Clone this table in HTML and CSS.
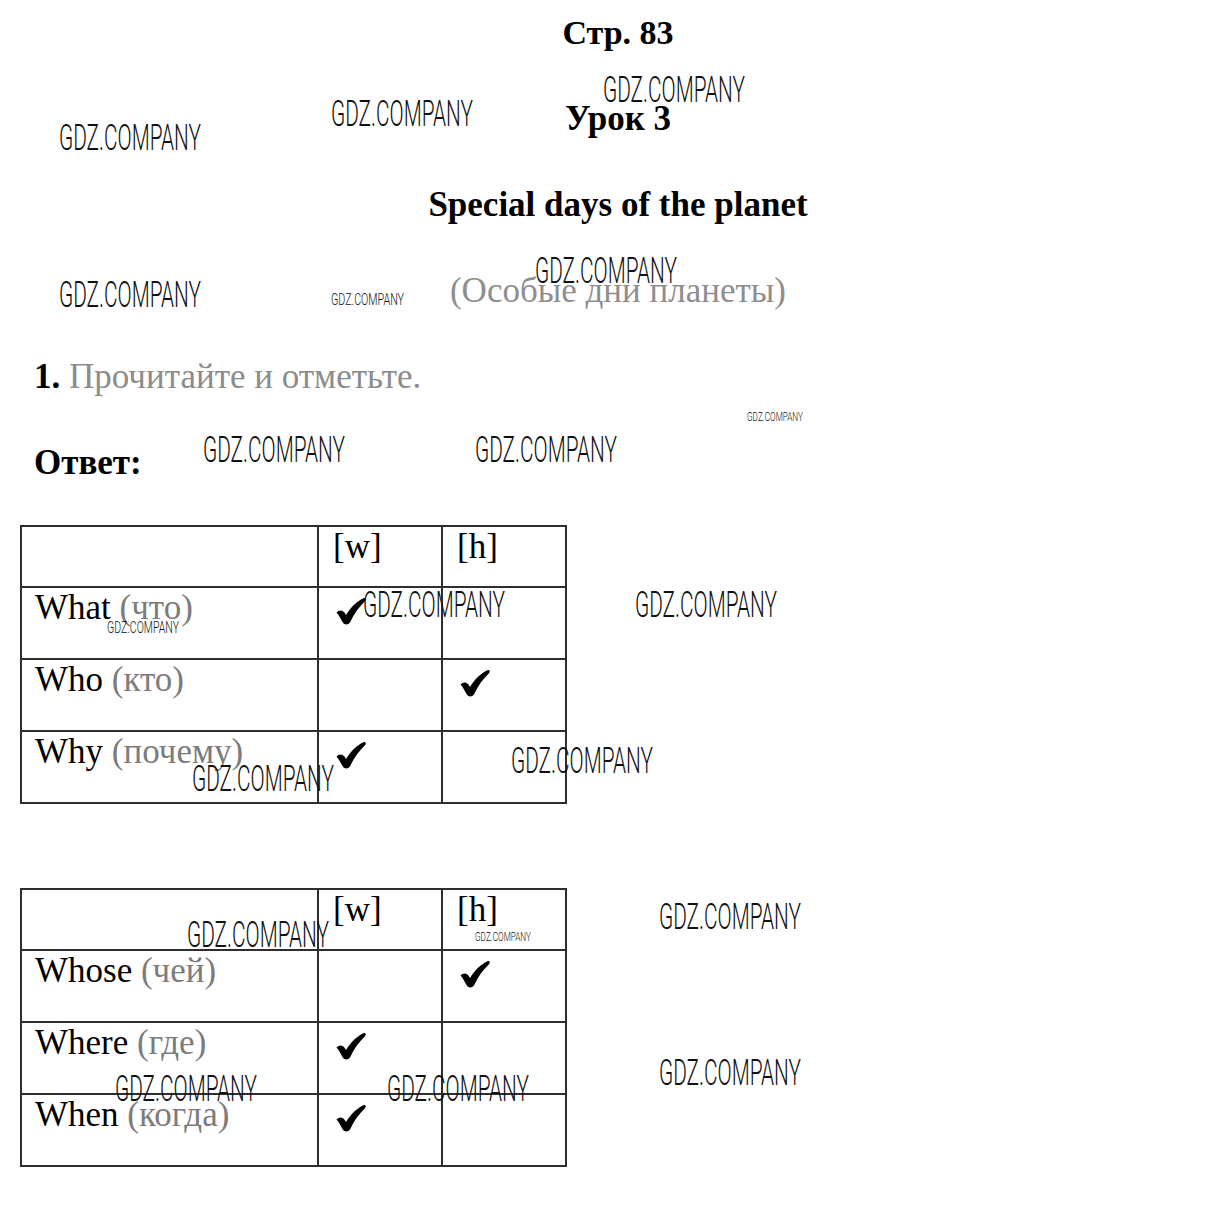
FILE: index.html
```html
<!DOCTYPE html>
<html lang="ru">
<head>
<meta charset="utf-8">
<title>Стр. 83</title>
<link rel="stylesheet" href="styles.css">
</head>
<body>
<div class="page">
  <h1 class="head">Стр. 83</h1>
  <h2 class="head">Урок 3</h2>
  <h2 class="head">Special days of the planet</h2>
  <p class="subtitle">(Особые дни планеты)</p>
  <p class="task"><b>1.</b> Прочитайте и отметьте.</p>
  <p class="answer">Ответ:</p>

  <table class="grid">
    <tr class="hrow"><td class="c1"></td><td class="c2">[w]</td><td class="c3">[h]</td></tr>
    <tr><td class="c1">What <span class="ru">(что)</span></td><td class="c2"><svg class="tick" viewBox="0 0 30 27" width="30" height="27"><path d="M.5 14.5C3 11.5 7 11.8 8.8 15L10 17C14.5 9.5 20.5 3.5 27.5.3C29.6-.5 30.5 1.6 29 3.2C22.5 9.5 18 15.5 14.5 23.5C13 26.8 9 27.6 7 24.8C5 21.8 3.2 17.2.5 14.5Z"/></svg></td><td class="c3"></td></tr>
    <tr><td class="c1">Who <span class="ru">(кто)</span></td><td class="c2"></td><td class="c3"><svg class="tick" viewBox="0 0 30 27" width="30" height="27"><path d="M.5 14.5C3 11.5 7 11.8 8.8 15L10 17C14.5 9.5 20.5 3.5 27.5.3C29.6-.5 30.5 1.6 29 3.2C22.5 9.5 18 15.5 14.5 23.5C13 26.8 9 27.6 7 24.8C5 21.8 3.2 17.2.5 14.5Z"/></svg></td></tr>
    <tr><td class="c1">Why <span class="ru">(почему)</span></td><td class="c2"><svg class="tick" viewBox="0 0 30 27" width="30" height="27"><path d="M.5 14.5C3 11.5 7 11.8 8.8 15L10 17C14.5 9.5 20.5 3.5 27.5.3C29.6-.5 30.5 1.6 29 3.2C22.5 9.5 18 15.5 14.5 23.5C13 26.8 9 27.6 7 24.8C5 21.8 3.2 17.2.5 14.5Z"/></svg></td><td class="c3"></td></tr>
  </table>

  <table class="grid second">
    <tr class="hrow"><td class="c1"></td><td class="c2">[w]</td><td class="c3">[h]</td></tr>
    <tr><td class="c1">Whose <span class="ru">(чей)</span></td><td class="c2"></td><td class="c3"><svg class="tick" viewBox="0 0 30 27" width="30" height="27"><path d="M.5 14.5C3 11.5 7 11.8 8.8 15L10 17C14.5 9.5 20.5 3.5 27.5.3C29.6-.5 30.5 1.6 29 3.2C22.5 9.5 18 15.5 14.5 23.5C13 26.8 9 27.6 7 24.8C5 21.8 3.2 17.2.5 14.5Z"/></svg></td></tr>
    <tr><td class="c1">Where <span class="ru">(где)</span></td><td class="c2"><svg class="tick" viewBox="0 0 30 27" width="30" height="27"><path d="M.5 14.5C3 11.5 7 11.8 8.8 15L10 17C14.5 9.5 20.5 3.5 27.5.3C29.6-.5 30.5 1.6 29 3.2C22.5 9.5 18 15.5 14.5 23.5C13 26.8 9 27.6 7 24.8C5 21.8 3.2 17.2.5 14.5Z"/></svg></td><td class="c3"></td></tr>
    <tr><td class="c1">When <span class="ru">(когда)</span></td><td class="c2"><svg class="tick" viewBox="0 0 30 27" width="30" height="27"><path d="M.5 14.5C3 11.5 7 11.8 8.8 15L10 17C14.5 9.5 20.5 3.5 27.5.3C29.6-.5 30.5 1.6 29 3.2C22.5 9.5 18 15.5 14.5 23.5C13 26.8 9 27.6 7 24.8C5 21.8 3.2 17.2.5 14.5Z"/></svg></td><td class="c3"></td></tr>
  </table>

  <svg class="wm big w1" width="142" height="28"><text x="0" y="27" textLength="142" lengthAdjust="spacingAndGlyphs">GDZ.COMPANY</text></svg>
  <svg class="wm big w2" width="142" height="28"><text x="0" y="27" textLength="142" lengthAdjust="spacingAndGlyphs">GDZ.COMPANY</text></svg>
  <svg class="wm big w3" width="142" height="28"><text x="0" y="27" textLength="142" lengthAdjust="spacingAndGlyphs">GDZ.COMPANY</text></svg>
  <svg class="wm big w4" width="142" height="28"><text x="0" y="27" textLength="142" lengthAdjust="spacingAndGlyphs">GDZ.COMPANY</text></svg>
  <svg class="wm small w5" width="73" height="14"><text x="0" y="13" textLength="73" lengthAdjust="spacingAndGlyphs">GDZ.COMPANY</text></svg>
  <svg class="wm big w6" width="142" height="28"><text x="0" y="27" textLength="142" lengthAdjust="spacingAndGlyphs">GDZ.COMPANY</text></svg>
  <svg class="wm tiny w7" width="56" height="12"><text x="0" y="11" textLength="56" lengthAdjust="spacingAndGlyphs">GDZ.COMPANY</text></svg>
  <svg class="wm big w8" width="142" height="28"><text x="0" y="27" textLength="142" lengthAdjust="spacingAndGlyphs">GDZ.COMPANY</text></svg>
  <svg class="wm big w9" width="142" height="28"><text x="0" y="27" textLength="142" lengthAdjust="spacingAndGlyphs">GDZ.COMPANY</text></svg>
  <svg class="wm small w10" width="72" height="14"><text x="0" y="13" textLength="72" lengthAdjust="spacingAndGlyphs">GDZ.COMPANY</text></svg>
  <svg class="wm big w11" width="142" height="28"><text x="0" y="27" textLength="142" lengthAdjust="spacingAndGlyphs">GDZ.COMPANY</text></svg>
  <svg class="wm big w12" width="142" height="28"><text x="0" y="27" textLength="142" lengthAdjust="spacingAndGlyphs">GDZ.COMPANY</text></svg>
  <svg class="wm big w13" width="142" height="28"><text x="0" y="27" textLength="142" lengthAdjust="spacingAndGlyphs">GDZ.COMPANY</text></svg>
  <svg class="wm big w14" width="142" height="28"><text x="0" y="27" textLength="142" lengthAdjust="spacingAndGlyphs">GDZ.COMPANY</text></svg>
  <svg class="wm big w15" width="142" height="28"><text x="0" y="27" textLength="142" lengthAdjust="spacingAndGlyphs">GDZ.COMPANY</text></svg>
  <svg class="wm big w16" width="142" height="28"><text x="0" y="27" textLength="142" lengthAdjust="spacingAndGlyphs">GDZ.COMPANY</text></svg>
  <svg class="wm tiny w17" width="56" height="12"><text x="0" y="11" textLength="56" lengthAdjust="spacingAndGlyphs">GDZ.COMPANY</text></svg>
  <svg class="wm big w18" width="142" height="28"><text x="0" y="27" textLength="142" lengthAdjust="spacingAndGlyphs">GDZ.COMPANY</text></svg>
  <svg class="wm big w19" width="142" height="28"><text x="0" y="27" textLength="142" lengthAdjust="spacingAndGlyphs">GDZ.COMPANY</text></svg>
  <svg class="wm big w20" width="142" height="28"><text x="0" y="27" textLength="142" lengthAdjust="spacingAndGlyphs">GDZ.COMPANY</text></svg>
</div>
</body>
</html>
```

FILE: styles.css
```css
html, body {
  margin: 0;
  padding: 0;
  background: #fff;
}

.page {
  position: relative;
  width: 1232px;
  height: 1219px;
  box-sizing: border-box;
  padding: 13px 20px 0 20px;
  font-family: "Liberation Serif", "Times New Roman", serif;
  color: #000;
  overflow: hidden;
}

.head {
  margin: 0 0 46px 0;
  padding-left: 4px;
  text-align: center;
  font-size: 35px;
  font-weight: bold;
  line-height: 40px;
}

h1.head {
  font-size: 34px;
}

.subtitle {
  margin: 0 0 46px 0;
  padding-left: 4px;
  text-align: center;
  font-size: 35px;
  line-height: 40px;
  color: #8e8e8e;
}

.task {
  margin: 0 0 46px 0;
  padding-left: 14px;
  font-size: 35px;
  line-height: 40px;
  color: #8c8c8c;
}

.task b {
  color: #000;
}

.answer {
  margin: 0 0 42px 0;
  padding-left: 14px;
  font-size: 35px;
  font-weight: bold;
  line-height: 40px;
}

.grid {
  border-collapse: collapse;
  table-layout: fixed;
  width: 545px;
  font-size: 35px;
  line-height: 40px;
}

.grid.second {
  margin-top: 84px;
}

.grid td {
  border: 2px solid #2e2e2e;
  padding: 0;
  vertical-align: top;
  height: 72px;
  box-sizing: border-box;
}

.grid .hrow td {
  height: 61px;
}

.grid .c1 {
  width: 297px;
  padding-left: 13px;
}

.grid .c2 {
  width: 124px;
  padding-left: 14px;
}

.grid .c3 {
  width: 124px;
  padding-left: 14px;
}

.ru {
  color: #7c7c7c;
}

.tick {
  display: block;
  margin: 10px 0 0 3px;
  fill: #000;
}

.wm {
  position: absolute;
  overflow: visible;
  fill: #111;
  font-family: "Roboto", "DejaVu Sans", sans-serif;
  font-weight: 300;
}

.wm.big text { font-size: 36px; }
.wm.small text { font-size: 16px; }
.wm.tiny text { font-size: 13px; }

.w1 { left: 603px; top: 75px; }
.w2 { left: 331px; top: 99px; }
.w3 { left: 59px; top: 123px; }
.w4 { left: 59px; top: 280px; }
.w5 { left: 331px; top: 292px; }
.w6 { left: 535px; top: 256px; }
.w7 { left: 747px; top: 410px; }
.w8 { left: 203px; top: 435px; }
.w9 { left: 475px; top: 435px; }
.w10 { left: 107px; top: 620px; }
.w11 { left: 363px; top: 590px; }
.w12 { left: 635px; top: 590px; }
.w13 { left: 192px; top: 764px; }
.w14 { left: 511px; top: 746px; }
.w15 { left: 187px; top: 920px; }
.w16 { left: 659px; top: 902px; }
.w17 { left: 475px; top: 930px; }
.w18 { left: 659px; top: 1058px; }
.w19 { left: 115px; top: 1074px; }
.w20 { left: 387px; top: 1074px; }
```
